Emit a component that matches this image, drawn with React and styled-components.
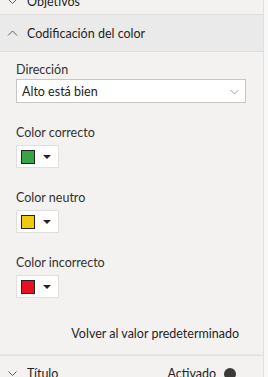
import React from "react";
import styled, { createGlobalStyle } from "styled-components";

const GlobalStyle = createGlobalStyle`
  html, body {
    margin: 0;
    padding: 0;
    background: #f3f2f1;
    font-family: Lato, "Noto Sans", sans-serif;
    overflow: hidden;
  }
`;

// Whole pane with scrollbar strip at the right
const Pane = styled.div`
  width: 268px;
  height: 377px;
  display: flex;
  overflow: hidden;
`;

const Content = styled.div`
  width: 263px;
  border-right: 1px solid #e1dfdd;
  display: flex;
  flex-direction: column;
  margin-top: -12px;
`;

const Scrollbar = styled.div`
  flex: 1;
  background: #f8f8f8;
`;

const Section = styled.div`
  flex: none;
  height: ${(p) => p.$h || 35}px;
  display: flex;
  align-items: center;
  gap: 9px;
  padding-left: 7px;
  font-size: 12.5px;
  color: #252423;
  background: ${(p) => (p.$active ? "#eaeaea" : "#f3f2f1")};
  border-bottom: 1px solid #e1dfdd;
  box-sizing: border-box;
`;

const Chevron = styled.svg`
  width: 11px;
  height: 11px;
  flex: none;
`;

const Body = styled.div`
  flex: none;
  padding: 9px 17px 0 16px;
  display: flex;
  flex-direction: column;
  border-bottom: 1px solid #e1dfdd;
  box-shadow: inset 0 -3px 0 -2px #ebe9e7;
`;

const Label = styled.div`
  font-size: 12.5px;
  color: #323130;
  height: 17px;
  line-height: 17px;
  margin-bottom: ${(p) => p.$mb ?? 4}px;
`;

const Field = styled.div`
  margin-bottom: ${(p) => p.$gap ?? 21}px;
`;

const Select = styled.div`
  height: 24px;
  background: #fff;
  border: 1px solid #c8c6c4;
  box-sizing: border-box;
  display: flex;
  align-items: center;
  justify-content: space-between;
  padding: 0 5px 0 5px;
  font-size: 12.5px;
  color: #252423;
`;

const ColorButton = styled.div`
  width: 43px;
  height: 23px;
  background: #fff;
  border: 1px solid #e1dfdd;
  box-sizing: border-box;
  display: flex;
  align-items: center;
  gap: 8px;
  padding-left: 4px;
`;

const Swatch = styled.div`
  width: 12px;
  height: 12px;
  background: ${(p) => p.$color};
  border: 1px solid #252423;
`;

const Caret = styled.div`
  width: 0;
  height: 0;
  border-left: 4px solid transparent;
  border-right: 4px solid transparent;
  border-top: 4px solid #252423;
`;

const ResetRow = styled.div`
  display: flex;
  justify-content: flex-end;
  font-size: 12.5px;
  line-height: 17px;
  color: #252423;
  padding: 27px 7px 13px 0;
`;

const Toggle = styled.div`
  margin-left: auto;
  margin-right: 27px;
  display: flex;
  align-items: center;
  gap: 8px;
`;

const Knob = styled.div`
  width: 12px;
  height: 12px;
  border-radius: 50%;
  background: #3b3a39;
`;

const ChevronDown = () => (
  <Chevron viewBox="0 0 11 11">
    <path d="M1.5 3.5 L5.5 7.5 L9.5 3.5" fill="none" stroke="#605e5c" strokeWidth="1" />
  </Chevron>
);

const ChevronUp = () => (
  <Chevron viewBox="0 0 11 11">
    <path d="M1 7.5 L5.5 3 L10 7.5" fill="none" stroke="#605e5c" strokeWidth="1" />
  </Chevron>
);

const ColorField = ({ label, color, gap }) => (
  <Field $gap={gap}>
    <Label>{label}</Label>
    <ColorButton>
      <Swatch $color={color} />
      <Caret />
    </ColorButton>
  </Field>
);

export default function App() {
  return (
    <>
      <GlobalStyle />
      <Pane>
        <Content>
          <Section $h={27}>
            <ChevronDown />
            <span>Objetivos</span>
          </Section>
          <Section $active $h={37}>
            <ChevronUp />
            <span>Codificación del color</span>
          </Section>
          <Body>
            <Field>
              <Label $mb={1}>Dirección</Label>
              <Select>
                <span>Alto está bien</span>
                <Chevron viewBox="0 0 11 11">
                  <path d="M1.5 4 L5.5 8 L9.5 4" fill="none" stroke="#a19f9d" strokeWidth="1" />
                </Chevron>
              </Select>
            </Field>
            <ColorField label="Color correcto" color="#37a446" />
            <ColorField label="Color neutro" color="#f2c811" />
            <ColorField label="Color incorrecto" color="#e81123" gap={0} />
            <ResetRow>Volver al valor predeterminado</ResetRow>
          </Body>
          <Section $h={36}>
            <ChevronDown />
            <span>Título</span>
            <Toggle>
              <span>Activado</span>
              <Knob />
            </Toggle>
          </Section>
        </Content>
        <Scrollbar />
      </Pane>
    </>
  );
}
